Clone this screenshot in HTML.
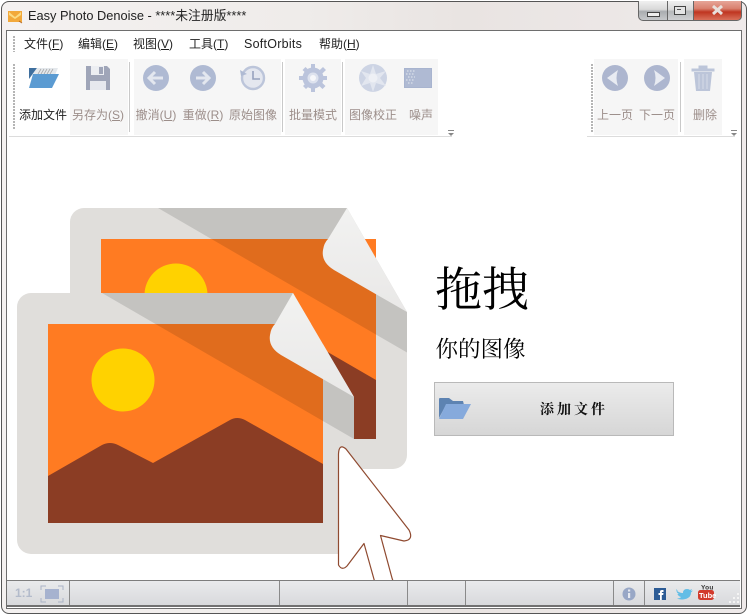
<!DOCTYPE html>
<html><head><meta charset="utf-8"><style>
html,body{margin:0;padding:0;background:#fff}
#w{position:relative;width:748px;height:614px;overflow:hidden;background:#fff;font-family:"Liberation Sans","Noto Sans CJK SC",sans-serif;filter:blur(.3px)}
#w div{position:absolute}
.m{top:36px;font-size:12px;line-height:16px;color:#222;white-space:nowrap}
.l{top:106px;font-size:12px;line-height:18px;color:#9c8e8a;white-space:nowrap;text-align:center;transform:translateX(-50%)}
.g{top:59px;height:76px;background:#f6f6f6}
.s{top:62px;height:70px;width:1px;background:#c9c9c9}
.d{top:581px;height:24px;width:1px;background:#8a8a8a}
.dot{width:2px;background:repeating-linear-gradient(#b5b5b5 0 2px,transparent 2px 3px)}
u{text-decoration:underline}
</style></head><body><div id="w">
<div style="left:1px;top:1px;width:744px;height:611px;border:1px solid #555;border-radius:8px;background:linear-gradient(90deg,#f4f1f0,#efecea 40%,#e9e4e2 62%,#efeaea 100%)"></div>
<div style="left:6px;top:30px;width:734px;height:577px;border:1px solid #6e6e6e;background:#fff"></div>

<svg style="position:absolute;left:8px;top:10px" width="15" height="14" viewBox="0 0 15 14"><rect x="0" y="1" width="14" height="11" fill="#f2a93b"/><path d="M1 2l6 5 6-5v3l-6 4-6-4z" fill="#fbdc85"/><path d="M11 11l3 2" stroke="#b5641c"/></svg>
<div style="left:28px;top:7px;font-size:12.8px;line-height:17px;color:#222;white-space:nowrap">Easy Photo Denoise - ****未注册版****</div>

<div style="left:638px;top:1px;width:29px;height:19px;border:1px solid #666;border-top:0;border-right:0;border-radius:0 0 0 5px;background:linear-gradient(#f0f0f0,#d8d8d8 45%,#a9acb0 55%,#c6c8ca)"></div>
<div style="left:667px;top:1px;width:25px;height:19px;border-left:1px solid #666;border-bottom:1px solid #666;background:linear-gradient(#f0f0f0,#d8d8d8 45%,#b6b8ba 55%,#cfd0d2)"></div>
<div style="left:693px;top:1px;width:47px;height:19px;border:1px solid #666;border-top:0;border-radius:0 0 5px 0;background:linear-gradient(#e6a598,#d9806e 40%,#bf3520 58%,#d9705a)"></div>
<div style="left:647px;top:12px;width:11px;height:3px;border:1px solid #444;background:#eee"></div>
<div style="left:674px;top:6px;width:10px;height:7px;border:1px solid #444;background:#e4e4e4"></div>
<div style="left:677px;top:9px;width:4px;height:1px;background:#555"></div>
<svg style="position:absolute;left:711px;top:4px" width="13" height="12"><path d="M2 2l9 8M11 2l-9 8" stroke="#e8e0dc" stroke-width="3"/></svg>

<div class="dot" style="left:13px;top:36px;height:16px"></div>
<div class="dot" style="left:13px;top:64px;height:66px"></div>
<div class="dot" style="left:591px;top:64px;height:68px"></div>

<div class="m" style="left:24px">文件(<u>F</u>)</div>
<div class="m" style="left:78px">编辑(<u>E</u>)</div>
<div class="m" style="left:133px">视图(<u>V</u>)</div>
<div class="m" style="left:189px">工具(<u>T</u>)</div>
<div class="m" style="left:244px;font-size:12.5px;letter-spacing:.25px">SoftOrbits</div>
<div class="m" style="left:319px">帮助(<u>H</u>)</div>

<div class="g" style="left:70px;width:58px"></div>
<div class="g" style="left:134px;width:147px"></div>
<div class="g" style="left:285px;width:56px"></div>
<div class="g" style="left:345px;width:93px"></div>
<div class="g" style="left:594px;width:84px"></div>
<div class="g" style="left:684px;width:38px"></div>
<div class="s" style="left:129px"></div>
<div class="s" style="left:282px"></div>
<div class="s" style="left:342px"></div>
<div class="s" style="left:680px"></div>
<div style="left:9px;top:136px;width:443px;height:1px;background:#dcdcdc"></div>
<div style="left:587px;top:136px;width:148px;height:1px;background:#dcdcdc"></div>

<svg style="position:absolute;left:0;top:60px" width="748" height="40" viewBox="0 60 748 40">
<path d="M29 68h8l-8 11z" fill="#3f6f9e"/>
<path d="M37 68h21l-3 7H32z" fill="#e4e8ec"/>
<path d="M38 74l3-5M41 74l3-5M44 74l3-5M47 74l3-5M50 74l3-5" stroke="#a9a9a9" stroke-width=".8"/>
<path d="M33 74h26l-7 14H29z" fill="#5b9bd2"/>
<path d="M86 66h21l3 3v21H86z" fill="#9fa5b8"/>
<rect x="91" y="66" width="13" height="9" fill="#eceef2"/>
<rect x="99" y="67" width="4" height="7" fill="#9fa5b8"/>
<rect x="90" y="81" width="16" height="9" fill="#e6e8ee"/>
<circle cx="156" cy="78" r="13" fill="#afbad3"/>
<path d="M163 78h-13M155 72l-6 6 6 6" stroke="#e3e7ef" stroke-width="3" fill="none"/>
<circle cx="203" cy="78" r="13" fill="#afbad3"/>
<path d="M196 78h13M203 72l6 6-6 6" stroke="#e3e7ef" stroke-width="3" fill="none"/>
<circle cx="253" cy="78" r="11" fill="#e4e7ef" stroke="#bcc5da" stroke-width="2.400"/>
<path d="M253 71v8h7" stroke="#98a3be" stroke-width="1.600" fill="none"/>
<path d="M240 70l1 6 6-2z" fill="#afbad3"/>
<g fill="#bbc4dc"><circle cx="313" cy="78" r="10.500"/>
<path d="M311 64h4v28h-4zM299 76h28v4h-28zM302.500 70l3-3 20 19-3 3zM323 67l3 3-20 19-3-3z"/></g>
<circle cx="313" cy="78" r="5.500" fill="#dde2ee"/><circle cx="313" cy="78" r="3" fill="#f6f7fa"/>
<circle cx="373" cy="78" r="14" fill="#cdd4e4"/>
<path d="M373 65l3 9 10 -3-6 7 6 8-10-3-3 9-3-9-9 3 5-8-5-7 9 3z" fill="#e2e6ef"/>
<circle cx="373" cy="78" r="4.500" fill="#eef0f5"/>
<rect x="404" y="68" width="28" height="20" fill="#a8b4cf"/>
<rect x="405" y="69" width="26" height="18" fill="#afbad3"/>
<path d="M407 71h8M406 74h9M408 77h7M406 80h9M408 83h6" stroke="#d4d9e6" stroke-width="1.600" stroke-dasharray="1.500 1.500"/>
<circle cx="615" cy="78" r="13" fill="#adb6cf"/>
<path d="M618 70l-11 8 11 8q-3-8 0-16z" fill="#e8ebf2"/>
<circle cx="657" cy="78" r="13" fill="#adb6cf"/>
<path d="M654 70l11 8-11 8q3-8 0-16z" fill="#e8ebf2"/>
<path d="M692 69h22v2h-22zM699 69v-3h8v3" fill="#bcc5d9" stroke="#bcc5d9" stroke-width="1"/>
<path d="M694 72h18l-2 19h-14z" fill="#bcc5d9"/>
<path d="M699 74v15M703 74v15M707 74v15" stroke="#d6dbe7" stroke-width="1"/>
</svg>

<div class="l" style="left:43px;color:#222">添加文件</div>
<div class="l" style="left:98px">另存为(<u>S</u>)</div>
<div class="l" style="left:156px">撤消(<u>U</u>)</div>
<div class="l" style="left:203px">重做(<u>R</u>)</div>
<div class="l" style="left:253px">原始图像</div>
<div class="l" style="left:313px">批量模式</div>
<div class="l" style="left:373px">图像校正</div>
<div class="l" style="left:421px">噪声</div>
<div class="l" style="left:615px">上一页</div>
<div class="l" style="left:657px">下一页</div>
<div class="l" style="left:705px">删除</div>

<svg style="position:absolute;left:447px;top:129px" width="8" height="8"><path d="M1 1.500h6" stroke="#888"/><path d="M1 4h6L4 7z" fill="#888"/></svg>
<svg style="position:absolute;left:730px;top:129px" width="8" height="8"><path d="M1 1.500h6" stroke="#888"/><path d="M1 4h6L4 7z" fill="#888"/></svg>

<svg style="position:absolute;left:0;top:0" width="748" height="581" viewBox="0 0 748 581">
<defs>
<linearGradient id="c" x1="0" y1="0" x2="0" y2="1"><stop offset="0" stop-color="#f2f2f1"/><stop offset="1" stop-color="#e9e8e7"/></linearGradient>
<clipPath id="bk"><path d="M84 208H347L407 312V455a14 14 0 0 1-14 14H84a14 14 0 0 1-14-14V222a14 14 0 0 1 14-14z"/></clipPath>
<clipPath id="fr"><path d="M31 293H293L354 397V554H31a14 14 0 0 1-14-14V307a14 14 0 0 1 14-14z"/></clipPath>
</defs>
<path d="M84 208H347L407 312V455a14 14 0 0 1-14 14H84a14 14 0 0 1-14-14V222a14 14 0 0 1 14-14z" fill="#e0dedb"/>
<rect x="101" y="239" width="275" height="200" fill="#ff7b22"/>
<circle cx="176" cy="295" r="31.500" fill="#ffd200"/>
<path d="M300 336L376 380V439H300z" fill="#8b3d24"/>
<g clip-path="url(#bk)"><path d="M158 208H347L407 312V352.500z" fill="#000" opacity=".12"/></g>
<path d="M347 208L407 312L334 270Q321 262 323 250Q324 243 328 239z" fill="url(#c)"/>

<path d="M31 293H293L354 397V554H31a14 14 0 0 1-14-14V307a14 14 0 0 1 14-14z" fill="#e0dedb"/>
<rect x="48" y="324" width="275" height="199" fill="#ff7b22"/>
<circle cx="123" cy="380" r="31.500" fill="#ffd200"/>
<path d="M48 476L102 445Q110 441 118 445L153 463L230 420Q237 416 245 420L323 464V523H48z" fill="#8b3d24"/>
<g clip-path="url(#fr)"><path d="M102 293H293L354 397V439z" fill="#000" opacity=".12"/></g>
<path d="M293 293L354 397L281 355Q268 347 270 335Q271 328 275 324z" fill="url(#c)"/>

<path d="M338.500 454Q339 443 346 449L409 530Q414 540 404 541L380.500 535.500L392 578L396 590H377L364 543.500L347 566Q342 571 338.500 565z" fill="#fff" stroke="#8f4a30" stroke-width="1.200" stroke-linejoin="round"/>
</svg>

<div style="left:435px;top:252px;font:47px/70px 'Noto Serif CJK SC','Liberation Serif',serif;color:#000;white-space:nowrap">拖拽</div>
<div style="left:435.500px;top:331px;font:22.500px/34px 'Noto Serif CJK SC','Liberation Serif',serif;color:#000;white-space:nowrap">你的图像</div>
<div style="left:434px;top:382px;width:238px;height:52px;border:1px solid #b9b9b9;background:linear-gradient(#ebebeb,#d6d6d6)"></div>
<svg style="position:absolute;left:438px;top:397px" width="34" height="24"><path d="M1 2q0-1 1-1h9l4 3h10l1 4H8L1 21z" fill="#5d83b2"/><path d="M8 7h25l-8 15H1z" fill="#86aadc"/></svg>
<div style="left:540px;top:399px;font:bold 14px/20px 'Noto Serif CJK SC','Liberation Serif',serif;color:#111;letter-spacing:3px;white-space:nowrap">添加文件</div>

<div style="left:7px;top:580px;width:733px;height:24px;border-top:1px solid #7d7d7d;border-bottom:2px solid #717171;background:linear-gradient(#e9eaec,#d8d9dc)"></div>
<div class="d" style="left:69px"></div>
<div class="d" style="left:279px"></div>
<div class="d" style="left:407px"></div>
<div class="d" style="left:465px"></div>
<div class="d" style="left:613px"></div>
<div class="d" style="left:644px"></div>
<div style="left:15px;top:586px;font:bold 12px/15px 'Liberation Sans',sans-serif;color:#b3bbcb">1:1</div>
<svg style="position:absolute;left:40px;top:585px" width="24" height="18"><path d="M1 5V1h5M18 1h5v4M23 13v4h-5M6 17H1v-4" stroke="#aab3c6" fill="none"/><rect x="5" y="4" width="14" height="10" fill="#a6b2cf"/></svg>
<svg style="position:absolute;left:620px;top:586px" width="18" height="16"><circle cx="9" cy="8" r="6.500" fill="#98a7c6"/><rect x="8" y="7" width="2.200" height="5" fill="#e6e9f0"/><rect x="8" y="3.500" width="2.200" height="2" fill="#e6e9f0"/></svg>
<svg style="position:absolute;left:650px;top:584px" width="70" height="18">
<rect x="4" y="4" width="12" height="12" fill="#2c5b95"/><path d="M10 16v-5H8.500V9H10V7.500Q10 6 12 6h1.500v2H12.500q-.7 0-.7.7V9h1.700l-.3 2h-1.400v5z" fill="#fff"/>
<path d="M26 6q3 3 7 3q0-4 4-4q2 0 3 1l2-1-1 2 2-.5-2 2q0 6-8 7q-4 0-6-1q3 0 4-1.500q-3-1-3.500-3h1.500q-2.500-1-2.500-3.500l1.500.5q-2-2-1-2z" fill="#62bde6"/>
<text x="51" y="5.500" font-size="6.500" font-weight="bold" font-family="Liberation Sans" fill="#333" letter-spacing=".3">You</text>
<rect x="48" y="6" width="16" height="10" rx="2.500" fill="#d23a2c"/>
<text x="49" y="14" font-size="7.500" font-weight="bold" font-family="Liberation Sans" fill="#fff">Tube</text>
</svg>
<svg style="position:absolute;left:728px;top:592px" width="12" height="12" fill="#f4f4f4"><rect x="9" y="1" width="2" height="2"/><rect x="5" y="5" width="2" height="2"/><rect x="9" y="5" width="2" height="2"/><rect x="1" y="9" width="2" height="2"/><rect x="5" y="9" width="2" height="2"/><rect x="9" y="9" width="2" height="2"/></svg>
</div></body></html>
